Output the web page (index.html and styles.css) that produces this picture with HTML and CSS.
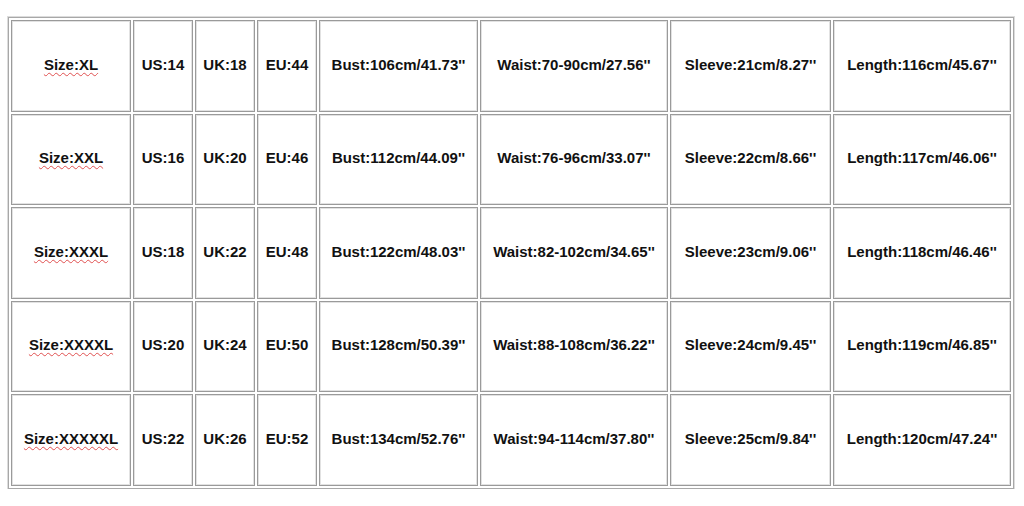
FILE: index.html
```html
<!DOCTYPE html>
<html>
<head>
<meta charset="utf-8">
<link rel="stylesheet" href="styles.css">
</head>
<body>
<table class="size-table">
  <colgroup>
    <col class="c-size"><col class="c-us"><col class="c-uk"><col class="c-eu">
    <col class="c-bust"><col class="c-waist"><col class="c-sleeve"><col class="c-length">
  </colgroup>
  <tbody>
    <tr>
      <td><span class="spell">Size:XL</span></td><td>US:14</td><td>UK:18</td><td>EU:44</td>
      <td>Bust:106cm/41.73''</td><td>Waist:70-90cm/27.56''</td><td>Sleeve:21cm/8.27''</td><td>Length:116cm/45.67''</td>
    </tr>
    <tr>
      <td><span class="spell">Size:XXL</span></td><td>US:16</td><td>UK:20</td><td>EU:46</td>
      <td>Bust:112cm/44.09''</td><td>Waist:76-96cm/33.07''</td><td>Sleeve:22cm/8.66''</td><td>Length:117cm/46.06''</td>
    </tr>
    <tr>
      <td><span class="spell">Size:XXXL</span></td><td>US:18</td><td>UK:22</td><td>EU:48</td>
      <td>Bust:122cm/48.03''</td><td>Waist:82-102cm/34.65''</td><td>Sleeve:23cm/9.06''</td><td>Length:118cm/46.46''</td>
    </tr>
    <tr>
      <td><span class="spell">Size:XXXXL</span></td><td>US:20</td><td>UK:24</td><td>EU:50</td>
      <td>Bust:128cm/50.39''</td><td>Waist:88-108cm/36.22''</td><td>Sleeve:24cm/9.45''</td><td>Length:119cm/46.85''</td>
    </tr>
    <tr>
      <td><span class="spell">Size:XXXXXL</span></td><td>US:22</td><td>UK:26</td><td>EU:52</td>
      <td>Bust:134cm/52.76''</td><td>Waist:94-114cm/37.80''</td><td>Sleeve:25cm/9.84''</td><td>Length:120cm/47.24''</td>
    </tr>
  </tbody>
</table>
</body>
</html>
```
FILE: styles.css
```css
html, body {
  margin: 0;
  padding: 0;
  background: #ffffff;
}
body {
  padding: 17px 0 0 8px;
  font-family: "Liberation Sans", Arial, sans-serif;
}
.size-table {
  table-layout: fixed;
  border-collapse: separate;
  border-spacing: 2px;
  border: 1px solid #a8a8a8;
  box-shadow: 0 0 0 1px #dcdcdc;
  width: 1006px;
}
.c-size { width: 120px; }
.c-us { width: 60px; }
.c-uk { width: 60px; }
.c-eu { width: 60px; }
.c-bust { width: 159px; }
.c-waist { width: 188px; }
.c-sleeve { width: 161px; }
.c-length { width: 178px; }
.size-table td {
  box-sizing: border-box;
  height: 91.5px;
  padding: 0 0 3px 0;
  border: 1px solid #9a9a9a;
  box-shadow: inset 0 0 0 1px #e2e2e2;
  text-align: center;
  vertical-align: middle;
  font-size: 15px;
  font-weight: bold;
  color: #111111;
  white-space: nowrap;
}
.spell {
  text-decoration: underline wavy #e05050;
  text-decoration-thickness: 1px;
  text-underline-offset: 2px;
}
```
